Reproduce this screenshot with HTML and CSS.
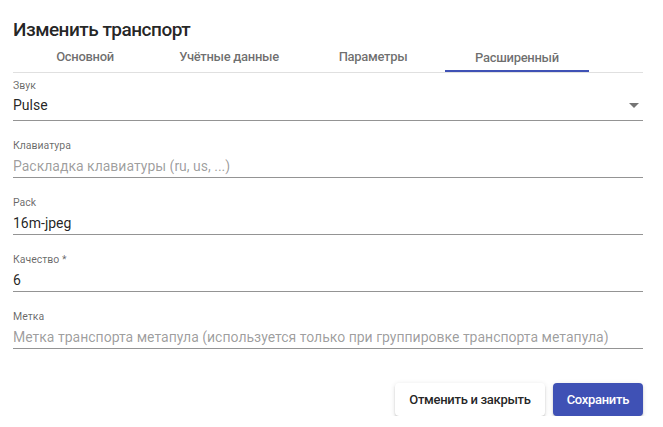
FILE: index.html
```html
<!DOCTYPE html>
<html lang="ru">
<head>
<meta charset="utf-8">
<title>Изменить транспорт</title>
<link rel="stylesheet" href="styles.css">
</head>
<body>
<div class="dialog">
  <h2 class="title">Изменить транспорт</h2>
  <div class="tabs">
    <div class="tab">Основной</div>
    <div class="tab">Учётные данные</div>
    <div class="tab">Параметры</div>
    <div class="tab active">Расширенный</div>
  </div>
  <div class="fields">
    <div class="field select-field">
      <div class="label">Звук</div>
      <div class="control select">
        <span class="value">Pulse</span>
        <span class="arrow"></span>
      </div>
    </div>
    <div class="field">
      <div class="label">Клавиатура</div>
      <div class="control"><span class="placeholder">Раскладка клавиатуры (ru, us, ...)</span></div>
    </div>
    <div class="field">
      <div class="label">Pack</div>
      <div class="control"><span class="value">16m-jpeg</span></div>
    </div>
    <div class="field">
      <div class="label">Качество *</div>
      <div class="control"><span class="value">6</span></div>
    </div>
    <div class="field">
      <div class="label">Метка</div>
      <div class="control"><span class="placeholder">Метка транспорта метапула (используется только при группировке транспорта метапула)</span></div>
    </div>
  </div>
  <div class="actions">
    <button class="btn cancel">Отменить и закрыть</button>
    <button class="btn save">Сохранить</button>
  </div>
</div>
</body>
</html>
```

FILE: styles.css
```css
html, body {
  margin: 0;
  padding: 0;
  background: #ffffff;
}
body {
  font-family: Roboto, "Liberation Sans", sans-serif;
  color: rgba(0, 0, 0, 0.87);
}
.dialog {
  width: 630px;
  margin-left: 13px;
  padding-top: 18px;
}
.title {
  margin: 0;
  font-size: 19px;
  line-height: 24px;
  font-weight: 500;
  letter-spacing: -0.5px;
  color: rgba(0, 0, 0, 0.87);
}
.tabs {
  display: flex;
  border-bottom: 1px solid #e0e0e0;
}
.tab {
  width: 144px;
  height: 30px;
  line-height: 30px;
  text-align: center;
  font-size: 13px;
  font-weight: 500;
  letter-spacing: -0.3px;
  color: rgba(0, 0, 0, 0.58);
  box-sizing: border-box;
}
.tab.active {
  border-bottom: 2px solid #3f51b5;
  line-height: 28px;
  padding-top: 2px;
}
.fields {
  padding-top: 6.5px;
  display: flex;
  flex-direction: column;
  gap: 19px;
}
.label {
  font-size: 10.5px;
  line-height: 12px;
  color: rgba(0, 0, 0, 0.6);
  margin-bottom: 4px;
}
.select-field .label {
  margin-bottom: 3px;
}
.control {
  display: flex;
  align-items: center;
  height: 20px;
  padding-bottom: 1px;
  border-bottom: 1px solid #949494;
  font-size: 14px;
  line-height: 20px;
}
.control.select {
  padding-bottom: 5px;
}
.value {
  flex: 1;
  color: rgba(0, 0, 0, 0.87);
}
.placeholder {
  flex: 1;
  color: rgba(0, 0, 0, 0.4);
  white-space: nowrap;
}
.arrow {
  width: 0;
  height: 0;
  border-left: 5px solid transparent;
  border-right: 5px solid transparent;
  border-top: 5px solid rgba(0, 0, 0, 0.54);
  margin-right: 4px;
  margin-top: 2px;
}
.actions {
  display: flex;
  justify-content: flex-end;
  gap: 8px;
  margin-top: 34px;
}
.btn {
  font-family: Roboto, "Liberation Sans", sans-serif;
  font-size: 13px;
  font-weight: 500;
  letter-spacing: -0.3px;
  height: 33px;
  padding: 0 14px;
  border: none;
  border-radius: 4px;
  box-shadow: 0 3px 1px -2px rgba(0, 0, 0, 0.2), 0 2px 2px 0 rgba(0, 0, 0, 0.14), 0 1px 5px 0 rgba(0, 0, 0, 0.12);
  cursor: pointer;
}
.cancel {
  background: #ffffff;
  color: rgba(0, 0, 0, 0.87);
}
.save {
  background: #3f51b5;
  color: #ffffff;
}
```
